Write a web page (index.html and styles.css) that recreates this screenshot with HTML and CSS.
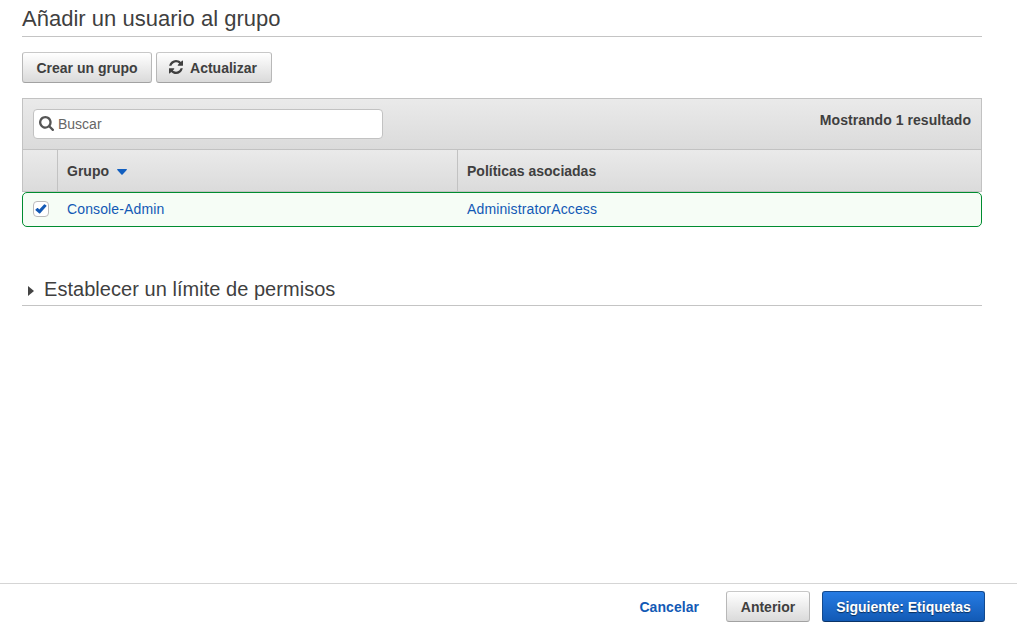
FILE: index.html
```html
<!DOCTYPE html>
<html lang="es">
<head>
<meta charset="utf-8">
<title>Añadir un usuario al grupo</title>
<link rel="stylesheet" href="styles.css">
</head>
<body>
<main class="content">
  <h1 class="title"><span class="title-text">Añadir un usuario al grupo</span></h1>
  <div class="actions">
    <button class="btn btn-create"><span class="t-create">Crear un grupo</span></button>
    <button class="btn btn-refresh">
      <svg class="icon-refresh" viewBox="0 0 1536 1536"><path fill="currentColor" d="M1511 928q0 5-1 7-64 268-268 434.5t-478 166.5q-146 0-282.5-55t-243.5-157l-129 129q-19 19-45 19t-45-19-19-45v-448q0-26 19-45t45-19h448q26 0 45 19t19 45-19 45l-137 137q71 66 161 102t187 36q134 0 250-65t186-179q11-17 53-117 8-23 30-23h192q13 0 22.5 9.5t9.5 22.5zm25-800v448q0 26-19 45t-45 19h-448q-26 0-45-19t-19-45 19-45l138-138q-148-137-349-137-134 0-250 65t-186 179q-11 17-53 117-8 23-30 23h-199q-13 0-22.5-9.5t-9.5-22.5v-7q65-268 270-434.5t480-166.5q146 0 284 55.5t245 156.5l130-129q19-19 45-19t45 19 19 45z"/></svg>
      <span class="t-refresh">Actualizar</span>
    </button>
  </div>
  <section class="table">
    <div class="toolbar">
      <div class="search">
        <svg class="icon-search" viewBox="64 128 1664 1664"><path fill="currentColor" d="M1216 832q0-185-131.5-316.5t-316.5-131.5-316.5 131.5-131.5 316.5 131.5 316.5 316.5 131.5 316.5-131.5 131.5-316.5zm512 832q0 52-38 90t-90 38q-54 0-90-38l-343-342q-179 124-399 124-143 0-273.5-55.5t-225-150-150-225-55.5-273.5 55.5-273.5 150-225 225-150 273.5-55.5 273.5 55.5 225 150 150 225 55.5 273.5q0 220-124 399l343 343q37 37 37 90z"/></svg>
        <span class="t-search">Buscar</span>
      </div>
      <span class="count">Mostrando 1 resultado</span>
    </div>
    <div class="head">
      <div class="cell"></div>
      <div class="cell"><span class="t-group">Grupo</span><svg class="sort" viewBox="0 0 10 6"><path fill="#125fc0" d="M.6 0h8.8q.9.3.3 1L5.6 5.5q-.6.5-1.2 0L.3 1Q-.2.3.6 0z"/></svg></div>
      <div class="cell"><span class="t-policies">Políticas asociadas</span></div>
    </div>
    <div class="row">
      <div class="check-cell"><span class="checkbox"><svg class="icon-check" viewBox="0 0 12 10"><path fill="#1259b5" d="M.5 5.5 2.2 4Q2.6 3.8 2.9 4.1L4.3 5.6 9 .5Q9.5 0 10 .4L11.4 1.4Q11.8 1.8 11.4 2.3L5.2 9.2Q4.6 9.9 4 9.2L.5 6.2Q.2 5.8.5 5.5z"/></svg></span></div>
      <a class="link"><span class="t-admin">Console-Admin</span></a>
      <a class="link"><span class="t-access">AdministratorAccess</span></a>
    </div>
  </section>
  <h2 class="limit"><svg class="arrow" viewBox="0 0 6 10"><path fill="#444" d="M0 0 6 5 0 10z"/></svg><span class="t-limit">Establecer un límite de permisos</span></h2>
</main>
<footer class="footer">
  <a class="cancel">Cancelar</a>
  <button class="btn btn-prev"><span class="t-prev">Anterior</span></button>
  <button class="btn btn-next"><span class="t-next">Siguiente: Etiquetas</span></button>
</footer>
</body>
</html>
```
FILE: styles.css
```css
* { box-sizing: border-box; }
body {
  margin: 0;
  height: 630px;
  display: flex;
  flex-direction: column;
  overflow: hidden;
  background: #fff;
  color: #3f3f3f;
  font: 14px/20px "Helvetica Neue", "Liberation Sans", Arial, sans-serif;
  white-space: nowrap;
}
.content { flex: 1; width: 960px; margin-left: 22px; }
.title {
  height: 37px;
  margin: 0;
  padding-top: 5px;
  border-bottom: 1px solid #c4c4c4;
  font-size: 22px;
  font-weight: 400;
  line-height: 28px;
}
.title-text { letter-spacing: .02px; }
.actions { display: flex; gap: 4px; margin-top: 15px; }
.btn {
  display: flex;
  align-items: center;
  justify-content: center;
  height: 31px;
  padding: 0;
  border: 1px solid #b8b8b8;
  border-top-color: #c8c8c8;
  border-bottom-color: #a2a2a2;
  border-radius: 3px;
  background: linear-gradient(#fff, #dadada);
  color: #3f3f3f;
  font: bold 14px/20px "Liberation Sans", Arial, sans-serif;
}
.btn-create { width: 130px; }
.btn-refresh { width: 116px; gap: 7px; padding-right: 2px; }
.icon-refresh { width: 14px; height: 14px; margin-bottom: 2px; }
.table { margin-top: 15px; }
.toolbar {
  display: flex;
  justify-content: space-between;
  height: 52px;
  padding: 10px;
  border: 1px solid #c2c2c2;
  background: linear-gradient(#eaeaea, #dbdbdb);
}
.search {
  display: flex;
  align-items: center;
  gap: 4px;
  width: 350px;
  height: 30px;
  padding-left: 5px;
  border: 1px solid #c2c2c2;
  border-radius: 4px;
  background: #fff;
  color: #666;
}
.icon-search { width: 15px; height: 15px; margin-bottom: 1px; color: #555; }
.count { padding: 1px 0 0; font-weight: bold; letter-spacing: .05px; }
.head {
  display: grid;
  grid-template-columns: 34px 400px 1fr;
  height: 42px;
  border: 1px solid #c2c2c2;
  border-top: 0;
  background: linear-gradient(#eaeaea, #dbdbdb);
  font-weight: bold;
}
.cell { display: flex; align-items: center; padding-left: 9px; border-left: 1px solid #c2c2c2; }
.cell:first-child { border-left: 0; }
.sort { width: 10px; height: 6px; margin: 2px 0 0 8px; }
.row {
  display: grid;
  grid-template-columns: 44px 400px 1fr;
  align-items: center;
  height: 35px;
  padding-bottom: 1px;
  border: 1px solid #008c30;
  border-radius: 5px;
  background: #f6fdf6;
}
.check-cell { padding-left: 10px; }
.checkbox {
  display: flex;
  align-items: center;
  justify-content: center;
  width: 16px;
  height: 16px;
  border: 1px solid #bbb;
  border-radius: 4px;
  background: #fff;
}
.icon-check { width: 12px; height: 10px; }
.link { color: #1259b5; letter-spacing: .13px; }
.limit {
  display: flex;
  align-items: center;
  height: 34px;
  margin: 45px 0 0;
  padding: 0 0 0 6px;
  border-bottom: 1px solid #c4c4c4;
  font-size: 20px;
  font-weight: 400;
}
.t-limit { letter-spacing: .04px; }
.arrow { width: 6px; height: 10px; margin: 4px 10px 0 0; }
.footer {
  display: flex;
  justify-content: flex-end;
  height: 47px;
  padding: 7px 32px 0 0;
  border-top: 1px solid #d5d5d5;
}
.cancel { margin: 6px 27px 0 0; color: #1259b5; font-weight: bold; letter-spacing: .05px; }
.btn-prev { width: 84px; margin-right: 12px; }
.btn-next {
  width: 163px;
  border-color: #134a8f;
  border-bottom-color: #0b3468;
  background: linear-gradient(#267be3, #125ab5);
  color: #fff;
  text-shadow: 0 1px 1px rgba(0, 0, 0, .55);
}
```
